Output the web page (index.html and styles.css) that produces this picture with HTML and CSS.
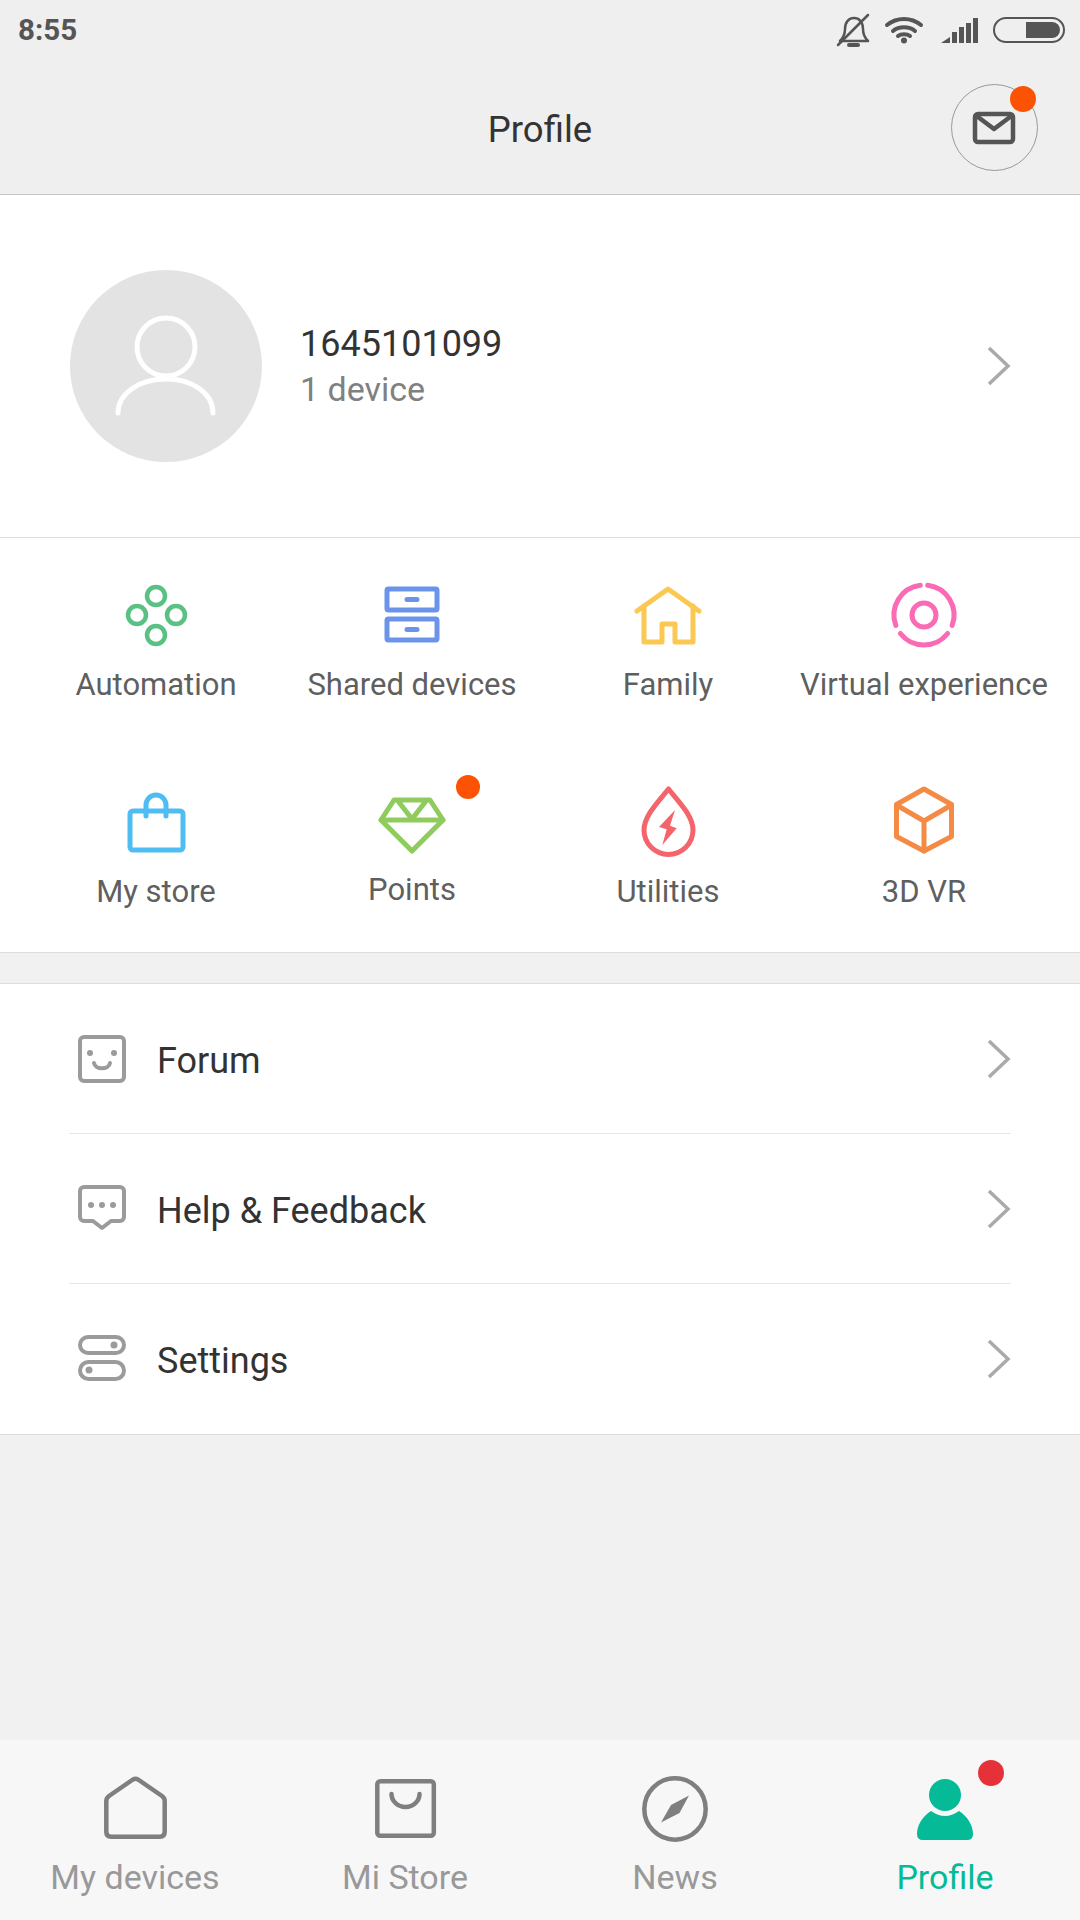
FILE: index.html
```html
<!DOCTYPE html>
<html lang="en">
<head>
    <meta charset="UTF-8">
    <meta name="viewport" content="width=device-width, initial-scale=1.0">
    <title>Profile</title>
    <link rel="stylesheet" href="styles.css">
</head>
<body>
    <header class="top">
        <div class="status-bar">
            <span class="time">8:55</span>
            <div class="status-icons">
                <svg class="st-bell" width="32" height="32" viewBox="0 0 32 32">
                    <path d="M3 27c3-3 5-6 5-12 0-7 4-11 9-11s9 4 9 11c0 6 2 9 5 12z"/>
                    <path class="st-clapper" d="M12 31h9"/>
                    <path d="M1 31L31 1"/>
                </svg>
                <svg class="st-wifi" width="38" height="28" viewBox="0 0 38 28">
                    <path d="M2 9c10-8 24-8 34 0"/>
                    <path d="M8 15c6-5 16-5 22 0"/>
                    <path d="M13 20c3-2.500 9-2.500 12 0"/>
                    <circle cx="19" cy="24.500" r="3"/>
                </svg>
                <svg class="st-signal" width="37" height="25" viewBox="0 0 37 25">
                    <path d="M0 25L9 19V25z"/>
                    <rect x="11" y="14" width="5" height="11"/>
                    <rect x="18" y="9" width="5" height="16"/>
                    <rect x="25" y="5" width="5" height="20"/>
                    <rect x="32" y="0" width="5" height="25"/>
                </svg>
                <div class="battery"><div class="battery-fill"></div></div>
            </div>
        </div>
        <div class="title-bar">
            <h1 class="title">Profile</h1>
            <div class="mail">
                <svg class="mail-icon" width="44" height="34" viewBox="0 0 44 34">
                    <rect x="3" y="3" width="38" height="28" rx="3"/>
                    <path d="M6 6l16 12L38 6"/>
                </svg>
                <span class="dot dot-mail"></span>
            </div>
        </div>
    </header>

    <main class="content">
        <section class="account">
            <div class="avatar">
                <svg width="192" height="192" viewBox="0 0 192 192">
                    <circle cx="96" cy="77" r="29"/>
                    <path d="M48 143c0-20 22-34 48-34s47 14 47 34"/>
                </svg>
            </div>
            <div class="account-text">
                <div class="account-name">1645101099</div>
                <div class="account-sub">1 device</div>
            </div>
            <svg class="chevron" width="26" height="42" viewBox="0 0 26 42"><path d="M4 3l19 18-19 18"/></svg>
        </section>

        <section class="shortcuts">
            <div class="shortcut">
                <svg class="sc-icon c-green" width="60" height="60" viewBox="0 0 60 60">
                    <circle cx="30" cy="11" r="9"/>
                    <circle cx="11" cy="30" r="9"/>
                    <circle cx="50" cy="30" r="9"/>
                    <circle cx="30" cy="50" r="9"/>
                </svg>
                <span class="sc-label">Automation</span>
            </div>
            <div class="shortcut">
                <svg class="sc-icon c-blue" width="60" height="60" viewBox="0 0 60 60">
                    <rect x="5" y="4" width="50" height="21" rx="1.500"/>
                    <rect x="5" y="34" width="50" height="21" rx="1.500"/>
                    <path d="M25 14.500h10M25 44.500h10"/>
                </svg>
                <span class="sc-label">Shared devices</span>
            </div>
            <div class="shortcut">
                <svg class="sc-icon c-yellow" width="60" height="60" viewBox="0 0 60 60">
                    <path d="M-1 26L30 4l31 22"/>
                    <path d="M6 21v36h18V39h13v18h18V21"/>
                </svg>
                <span class="sc-label">Family</span>
            </div>
            <div class="shortcut">
                <svg class="sc-icon c-pink" width="60" height="60" viewBox="0 0 60 60">
                    <circle cx="30" cy="30" r="12"/>
                    <path d="M33.700 0.200A30 30 0 0 1 58.200 40.300"/>
                    <path d="M53.600 48.500A30 30 0 0 1 6.400 48.500"/>
                    <path d="M1.800 40.300A30 30 0 0 1 26.300 0.200"/>
                </svg>
                <span class="sc-label">Virtual experience</span>
            </div>
            <div class="shortcut">
                <svg class="sc-icon c-sky" width="60" height="60" viewBox="0 0 60 60">
                    <rect x="4" y="19" width="53" height="39" rx="3"/>
                    <path d="M20 24V13a10 10 0 0 1 20 0v11"/>
                </svg>
                <span class="sc-label">My store</span>
            </div>
            <div class="shortcut">
                <svg class="sc-icon c-lime" width="60" height="60" viewBox="0 0 60 60">
                    <path d="M-1 28L12 8h36l13 20-31 31z"/>
                    <path d="M-1 28h62"/>
                    <path d="M16 9l14 18L44 9"/>
                </svg>
                <span class="sc-label sc-label-up">Points</span>
                <span class="dot dot-points"></span>
            </div>
            <div class="shortcut">
                <svg class="sc-icon c-red" width="60" height="60" viewBox="0 0 60 60">
                    <path d="M30.500-3C20 10 6 24 6 38a24.500 24.500 0 0 0 49 0C55 24 41 10 30.500-3z"/>
                    <path class="bolt" d="M37 18L21 35l7.700 2.300L24.300 53l14.400-16.700-6.700-2.600z"/>
                </svg>
                <span class="sc-label">Utilities</span>
            </div>
            <div class="shortcut">
                <svg class="sc-icon c-orange" width="60" height="60" viewBox="0 0 60 60">
                    <path d="M30-3l27.500 15.500v32L30 59 2.500 44.500v-32z"/>
                    <path d="M2.500 13L30 29l27.500-16M30 29v30"/>
                </svg>
                <span class="sc-label">3D VR</span>
            </div>
        </section>

        <section class="menu">
            <div class="menu-row">
                <svg class="menu-icon" width="48" height="48" viewBox="0 0 48 48">
                    <rect x="2" y="2" width="44" height="44" rx="4"/>
                    <path d="M16 28c1 7 15 7 16 0"/>
                    <circle class="pt" cx="12" cy="18" r="3"/>
                    <circle class="pt" cx="36" cy="18" r="3"/>
                </svg>
                <span class="menu-label">Forum</span>
                <svg class="chevron" width="26" height="42" viewBox="0 0 26 42"><path d="M4 3l19 18-19 18"/></svg>
            </div>
            <div class="menu-row">
                <svg class="menu-icon" width="48" height="48" viewBox="0 0 48 48">
                    <path d="M6 2h36a4 4 0 0 1 4 4v26a4 4 0 0 1-4 4h-9l-9 7-9-7H6a4 4 0 0 1-4-4V6a4 4 0 0 1 4-4z"/>
                    <circle class="pt" cx="13" cy="20" r="3"/>
                    <circle class="pt" cx="24" cy="20" r="3"/>
                    <circle class="pt" cx="35" cy="20" r="3"/>
                </svg>
                <span class="menu-label">Help &amp; Feedback</span>
                <svg class="chevron" width="26" height="42" viewBox="0 0 26 42"><path d="M4 3l19 18-19 18"/></svg>
            </div>
            <div class="menu-row">
                <svg class="menu-icon" width="48" height="48" viewBox="0 0 48 48">
                    <rect x="2" y="2" width="44" height="16" rx="8"/>
                    <rect x="2" y="27" width="44" height="17" rx="8.500"/>
                    <circle class="pt" cx="36" cy="10" r="3.500"/>
                    <circle class="pt" cx="11" cy="35" r="3.500"/>
                </svg>
                <span class="menu-label">Settings</span>
                <svg class="chevron" width="26" height="42" viewBox="0 0 26 42"><path d="M4 3l19 18-19 18"/></svg>
            </div>
        </section>
    </main>

    <nav class="tabs">
        <div class="tab">
            <svg class="tab-icon" width="66" height="66" viewBox="0 0 66 66">
                <path d="M4.300 26q0-3 2.700-5L31 4.500q2.500-1.500 5 0L60 21q2.700 2 2.700 5v31q0 4.700-4.700 4.700H9q-4.700 0-4.700-4.700z"/>
            </svg>
            <span class="tab-label">My devices</span>
        </div>
        <div class="tab">
            <svg class="tab-icon" width="66" height="66" viewBox="0 0 66 66">
                <rect x="5.300" y="6.300" width="56.500" height="54.500" rx="3"/>
                <path d="M19.500 19a14 13 0 0 0 28 0"/>
            </svg>
            <span class="tab-label">Mi Store</span>
        </div>
        <div class="tab">
            <svg class="tab-icon" width="66" height="66" viewBox="0 0 66 66">
                <circle cx="33" cy="34" r="30.700"/>
                <path class="needle" d="M47 20.500L37.500 38 19 47.500 29 30z"/>
            </svg>
            <span class="tab-label">News</span>
        </div>
        <div class="tab tab-active">
            <svg class="tab-icon" width="66" height="66" viewBox="0 0 66 66">
                <circle class="solid" cx="33" cy="20" r="16"/>
                <path class="solid" d="M19 36Q33 46 47 36C55 41 61 50 61 59q0 6-6 6H11q-6 0-6-6C5 50 11 41 19 36z"/>
            </svg>
            <span class="tab-label">Profile</span>
            <span class="dot dot-tab"></span>
        </div>
    </nav>
</body>
</html>
```

FILE: styles.css
```css
body {
    font-family: Roboto, "Liberation Sans", sans-serif;
    margin: 0;
    width: 1080px;
    height: 1920px;
    display: flex;
    flex-direction: column;
    background-color: #f1f1f1;
    color: #333;
    overflow: hidden;
}
svg {
    display: block;
    overflow: visible;
    fill: none;
    stroke-linecap: round;
    stroke-linejoin: round;
}
.dot {
    position: absolute;
    border-radius: 50%;
    background-color: #fc5204;
}

/* status bar + title */
.top {
    background-color: #efefef;
    border-bottom: 1px solid #c6c6c6;
}
.status-bar {
    height: 60px;
    padding: 0 15px 0 18px;
    display: flex;
    align-items: center;
    justify-content: space-between;
}
.time {
    font-size: 29.500px;
    font-weight: 700;
    color: #555;
}
.status-icons {
    display: flex;
    align-items: center;
}
.st-bell {
    stroke: #555;
    stroke-width: 2.500;
    margin-right: 16px;
}
.st-clapper {
    stroke-width: 4;
}
.st-wifi {
    stroke: #555;
    stroke-width: 4;
    margin-right: 18px;
}
.st-wifi circle {
    fill: #555;
    stroke: none;
}
.st-signal {
    fill: #555;
    margin-right: 15px;
}
.battery {
    width: 72px;
    height: 26px;
    box-sizing: border-box;
    border: 2.500px solid #555;
    border-radius: 13px;
    padding: 3px;
    display: flex;
    justify-content: flex-end;
}
.battery-fill {
    width: 34px;
    background-color: #555;
    border-radius: 0 9px 9px 0;
}
.title-bar {
    height: 134px;
    display: flex;
    align-items: center;
    justify-content: center;
    position: relative;
}
.title {
    margin: 5px 0 0;
    font-size: 36.500px;
    font-weight: 400;
    color: #333;
}
.mail {
    position: absolute;
    left: 951px;
    top: 24px;
    width: 87px;
    height: 87px;
    box-sizing: border-box;
    padding-right: 2px;
    border: 1px solid #999;
    border-radius: 50%;
    display: flex;
    align-items: center;
    justify-content: center;
}
.mail-icon {
    stroke: #555;
    stroke-width: 4.500;
}
.dot-mail {
    width: 26px;
    height: 26px;
    left: 58px;
    top: 1px;
}

/* account */
.account {
    height: 343px;
    box-sizing: border-box;
    background-color: #fff;
    padding: 0 69px 0 70px;
    display: flex;
    align-items: center;
    border-bottom: 1px solid #ddd;
}
.avatar {
    width: 192px;
    height: 192px;
    border-radius: 50%;
    background-color: #e3e3e3;
}
.avatar svg {
    stroke: #fff;
    stroke-width: 5;
}
.account-text {
    margin-left: 38px;
    padding-top: 1px;
    flex: 1;
}
.account-name {
    font-size: 36px;
    line-height: 44px;
}
.account-sub {
    margin-top: 1px;
    font-size: 34px;
    line-height: 44px;
    color: #808080;
}
.chevron {
    stroke: #aaa;
    stroke-width: 3.500;
    stroke-linecap: butt;
    stroke-linejoin: miter;
}

/* shortcut grid */
.shortcuts {
    background-color: #fff;
    padding: 0 28px;
    display: grid;
    grid-template-columns: repeat(4, 256px);
    grid-auto-rows: 207px;
    border-bottom: 1px solid #ddd;
    margin-bottom: 30px;
}
.shortcut {
    position: relative;
    display: flex;
    flex-direction: column;
    align-items: center;
    padding-top: 47px;
}
.sc-icon {
    stroke-width: 5;
}
.sc-label {
    margin-top: 18px;
    font-size: 31px;
    line-height: 44px;
    color: #5f5f5f;
    white-space: nowrap;
}
.sc-label-up {
    margin-top: 16px;
}
.c-green { stroke: #5ac083; stroke-width: 4.500; }
.c-blue { stroke: #6b93ea; }
.c-yellow { stroke: #fbc853; }
.c-pink { stroke: #fb6bb5; }
.c-sky { stroke: #4fbdf3; }
.c-lime { stroke: #8fcb5d; }
.c-red { stroke: #f4646a; }
.c-orange { stroke: #f58a45; }
.bolt {
    fill: #f4646a;
    stroke: none;
}
.dot-points {
    width: 24px;
    height: 24px;
    left: 172px;
    top: 30px;
}

/* menu */
.menu {
    background-color: #fff;
    padding: 0 69px;
    border-top: 1px solid #ddd;
    border-bottom: 1px solid #ddd;
}
.menu-row {
    height: 150px;
    box-sizing: border-box;
    padding-left: 9px;
    display: flex;
    align-items: center;
    border-bottom: 1px solid #e6e6e6;
}
.menu-row:last-child {
    border-bottom: none;
}
.menu-icon {
    stroke: #9b9b9b;
    stroke-width: 4;
}
.pt {
    fill: #9b9b9b;
    stroke: none;
}
.menu-label {
    margin: 4px 0 0 31px;
    flex: 1;
    font-size: 36px;
    color: #333;
}

/* bottom tabs */
.content {
    flex: 1;
}
.tabs {
    height: 180px;
    box-sizing: border-box;
    background-color: #f7f7f7;
    display: grid;
    grid-template-columns: repeat(4, 1fr);
}
.tab {
    position: relative;
    display: flex;
    flex-direction: column;
    align-items: center;
    padding-top: 35px;
}
.tab-icon {
    stroke: #7f7f7f;
    stroke-width: 4.500;
}
.needle {
    fill: #7f7f7f;
    stroke: none;
}
.solid {
    fill: #05ba97;
    stroke: none;
}
.tab-label {
    margin-top: 14px;
    font-size: 34px;
    line-height: 44px;
    color: #999;
}
.tab-active .tab-label {
    color: #05ba97;
}
.dot-tab {
    width: 26px;
    height: 26px;
    left: 168px;
    top: 20px;
    background-color: #e53238;
}
```
